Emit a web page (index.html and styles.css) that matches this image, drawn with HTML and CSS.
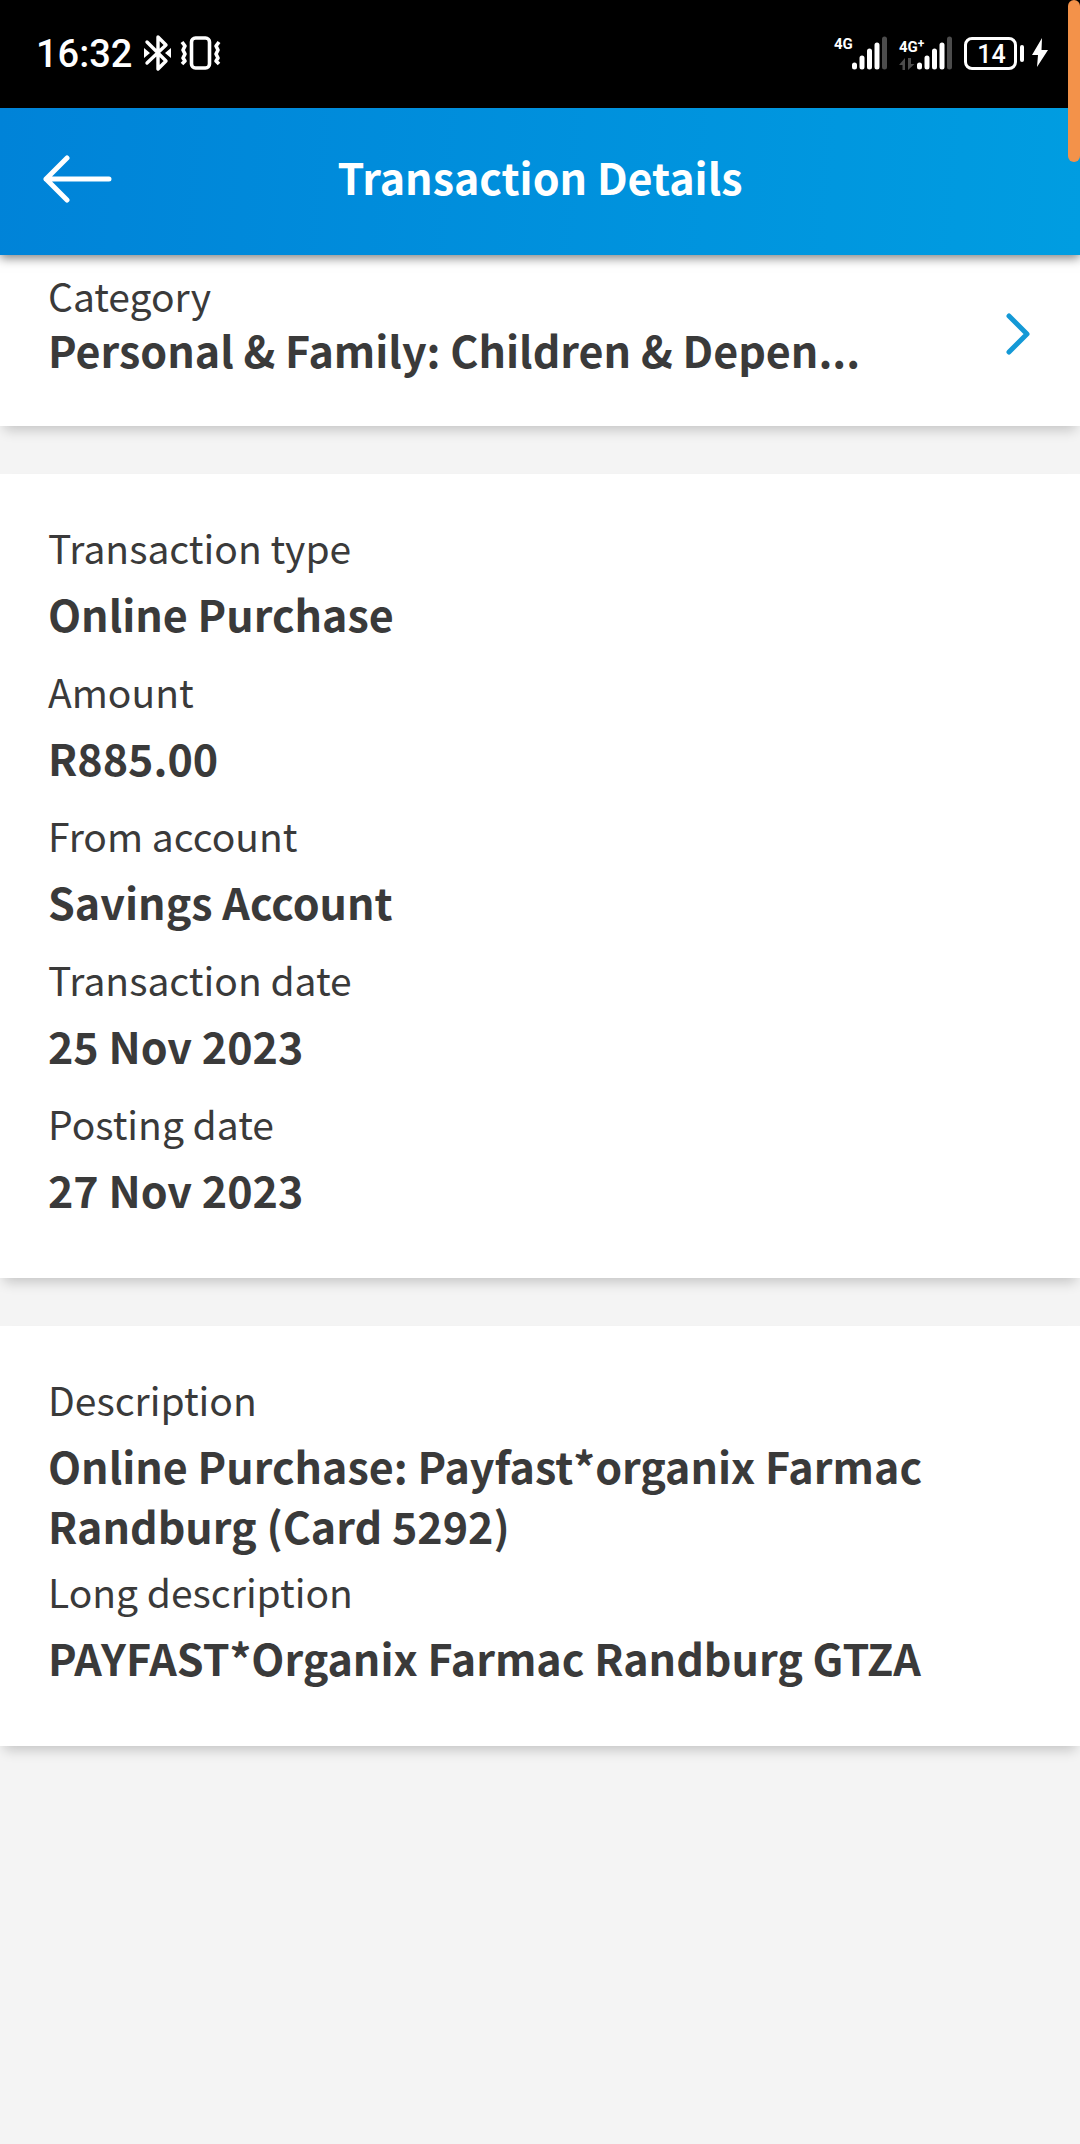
FILE: index.html
```html
<!DOCTYPE html>
<html lang="en">
<head>
<meta charset="utf-8">
<meta name="viewport" content="width=device-width, initial-scale=1">
<title>Transaction Details</title>
<link rel="stylesheet" href="styles.css">
</head>
<body>
<div class="edge-handle"></div>

<div class="status-bar">
  <div class="status-left">
    <span class="clock">16:32</span>
    <svg class="bluetooth" width="28" height="38" viewBox="0 0 28 38" aria-label="Bluetooth connected">
      <path d="M3 8 L22 27 L14 35 V3 L22 11 L3 29" fill="none" stroke="#fff" stroke-width="3.4" stroke-linejoin="round" stroke-linecap="round"/>
      <path d="M0 14 L6 19 L0 24 Z M27 14 L21 19 L27 24 Z" fill="#fff"/>
    </svg>
    <svg class="vibrate" width="42" height="34" viewBox="0 0 42 34" aria-label="Vibrate">
      <rect x="11.5" y="2" width="18" height="30" rx="4" fill="none" stroke="#fff" stroke-width="3.6"/>
      <path d="M2 6 L5 10 L3 14 L5 18 L3 22 L5 25 L2 28 M39 6 L36 10 L38 14 L36 18 L38 22 L36 25 L39 28" fill="none" stroke="#fff" stroke-width="3.6" stroke-linejoin="round"/>
    </svg>
  </div>
  <div class="status-right">
    <div class="signal">
      <span class="network">4G</span>
      <svg width="35" height="34" viewBox="0 0 35 34" aria-hidden="true">
        <g stroke-width="5" stroke-linecap="round" stroke="#fff">
          <path d="M2.500 29V31M10 22V31M17.500 15V31M25 9V31"/>
          <path d="M32.500 3V31" stroke="#4c4c4c"/>
        </g>
      </svg>
    </div>
    <div class="signal">
      <span class="network">4G<span class="plus">+</span></span>
      <svg width="53" height="34" viewBox="0 0 53 34" aria-hidden="true">
        <path d="M0 29 L6 22 V34 H3.500 V29 Z M9 22 V34 L15.500 28 H12 V22 Z" fill="#4c4c4c"/>
        <g stroke-width="5" stroke-linecap="round" stroke="#fff">
          <path d="M20.500 29V31M28 22V31M35.500 15V31M43 9V31"/>
          <path d="M50.500 3V31" stroke="#4c4c4c"/>
        </g>
      </svg>
    </div>
    <div class="battery"><span class="battery-level">14</span></div>
    <svg class="bolt" width="16" height="30" viewBox="0 0 16 30" aria-label="Charging">
      <path d="M10 0 L0 17 H6 L5 29 L16 12 H9.500 Z" fill="#fff"/>
    </svg>
  </div>
</div>

<header class="app-bar">
  <button class="back" type="button" aria-label="Back">
    <svg width="72" height="48" viewBox="0 0 72 48">
      <path d="M25 3 L4 24 L25 45 M4 24 H67" fill="none" stroke="#fff" stroke-width="5" stroke-linecap="round" stroke-linejoin="round"/>
    </svg>
  </button>
  <h1 class="title">Transaction Details</h1>
</header>

<main class="content">
  <a class="card category" href="#category">
    <span class="category-text">
      <span class="label">Category</span>
      <span class="value">Personal &amp; Family: Children &amp; Depen...</span>
    </span>
    <svg class="chevron" width="28" height="44" viewBox="0 0 28 44" aria-hidden="true">
      <path d="M5 4 L23 22 L5 40" fill="none" stroke="#1499d6" stroke-width="5" stroke-linecap="round" stroke-linejoin="round"/>
    </svg>
  </a>

  <dl class="card details">
    <div class="field"><dt class="label">Transaction type</dt><dd class="value">Online Purchase</dd></div>
    <div class="field"><dt class="label">Amount</dt><dd class="value">R885.00</dd></div>
    <div class="field"><dt class="label">From account</dt><dd class="value">Savings Account</dd></div>
    <div class="field"><dt class="label">Transaction date</dt><dd class="value">25 Nov 2023</dd></div>
    <div class="field"><dt class="label">Posting date</dt><dd class="value">27 Nov 2023</dd></div>
  </dl>

  <dl class="card details">
    <div class="field"><dt class="label">Description</dt><dd class="value">Online Purchase: Payfast*organix Farmac Randburg (Card 5292)</dd></div>
    <div class="field"><dt class="label">Long description</dt><dd class="value">PAYFAST*Organix Farmac Randburg GTZA</dd></div>
  </dl>
</main>
</body>
</html>
```

FILE: styles.css
```css
* {
  box-sizing: border-box;
}

body {
  margin: 0;
  min-height: 100vh;
  background: #f4f4f4;
  color: #3a3a3a;
  font-family: "Noto Sans CJK SC", "Noto Sans", sans-serif;
}

svg {
  display: block;
  flex: none;
}

.edge-handle {
  position: absolute;
  top: 0;
  right: 0;
  z-index: 3;
  width: 12px;
  height: 162px;
  border-radius: 6px;
  background: #f3924a;
}

.status-bar {
  display: flex;
  justify-content: space-between;
  align-items: center;
  height: 108px;
  padding: 0 32px 2px 36px;
  background: #000;
  color: #fff;
  font-family: Roboto, sans-serif;
}

.status-left,
.status-right {
  display: flex;
  align-items: center;
}

.clock {
  padding-top: 2px;
  font-size: 38px;
  line-height: 48px;
  font-weight: 500;
}

.bluetooth {
  margin-left: 12px;
}

.vibrate {
  margin-left: 8px;
}

.status-right {
  gap: 12px;
}

.signal {
  position: relative;
  display: flex;
  justify-content: flex-end;
  width: 53px;
}

.network {
  position: absolute;
  top: 0;
  left: 0;
  font: bold 15px/16px Roboto, sans-serif;
}

.plus {
  font-size: 12px;
  vertical-align: 4px;
}

.battery {
  position: relative;
  width: 53px;
  height: 33px;
  margin-right: 3px;
  border: 3px solid #fff;
  border-radius: 8px;
  text-align: center;
}

.battery::after {
  content: "";
  position: absolute;
  top: 5px;
  right: -10px;
  width: 4px;
  height: 17px;
  border-radius: 2px;
  background: #fff;
}

.battery-level {
  display: block;
  padding-left: 2px;
  font-size: 25px;
  line-height: 29px;
  font-weight: 500;
}

.app-bar {
  position: relative;
  z-index: 2;
  display: grid;
  grid-template-columns: 72px 1fr 72px;
  align-items: center;
  height: 147px;
  padding: 0 42px 6px;
  background: linear-gradient(95deg, #0083d8, #009de1);
  box-shadow: 0 3px 10px rgba(0, 0, 0, 0.5);
}

.back {
  padding: 0;
  border: 0;
  background: none;
}

.title {
  margin: 0;
  padding-bottom: 6px;
  color: #fff;
  font-size: 43px;
  line-height: 60px;
  font-weight: 700;
  text-align: center;
}

.content {
  display: flex;
  flex-direction: column;
  gap: 48px;
}

.card {
  margin: 0;
  padding: 49px 48px 47px;
  background: #fff;
  box-shadow: 0 8px 12px -4px rgba(0, 0, 0, 0.2);
}

.category {
  display: flex;
  justify-content: space-between;
  align-items: center;
  padding-top: 16px;
  color: inherit;
  text-decoration: none;
}

.category-text {
  display: flex;
  flex-direction: column;
  min-width: 0;
}

.chevron {
  margin-top: 18px;
}

.details {
  display: flex;
  flex-direction: column;
  gap: 12px;
}

.label {
  font-size: 39px;
  line-height: 48px;
  font-weight: 400;
}

.value {
  margin: 0;
  font-size: 43px;
  line-height: 60px;
  font-weight: 700;
}

.details .label {
  margin-bottom: 12px;
}

.details .value {
  min-height: 72px;
}
```
